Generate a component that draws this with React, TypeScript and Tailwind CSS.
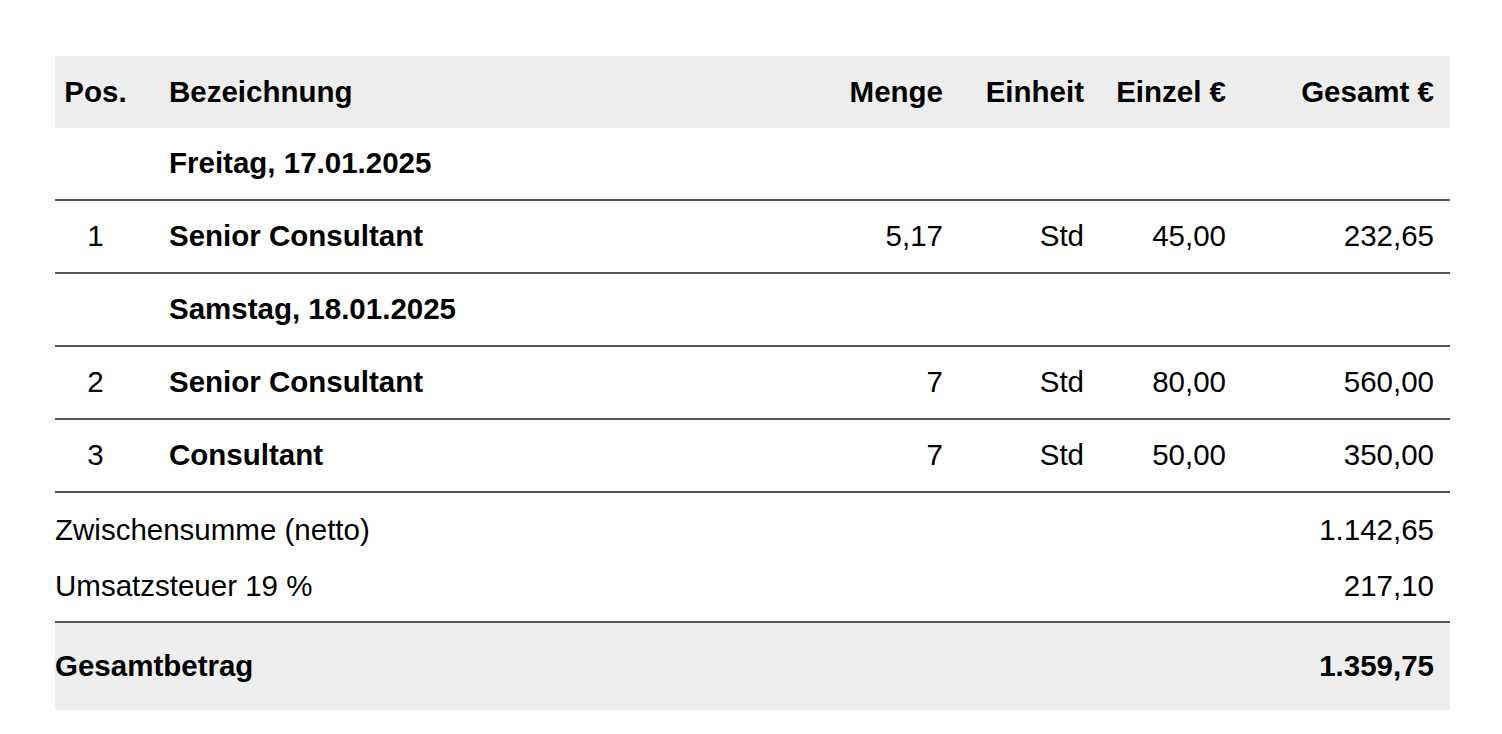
const rows: Array<
  | { kind: "date"; label: string }
  | { kind: "item"; pos: string; name: string; qty: string; unit: string; price: string; total: string }
> = [
  { kind: "date", label: "Freitag, 17.01.2025" },
  { kind: "item", pos: "1", name: "Senior Consultant", qty: "5,17", unit: "Std", price: "45,00", total: "232,65" },
  { kind: "date", label: "Samstag, 18.01.2025" },
  { kind: "item", pos: "2", name: "Senior Consultant", qty: "7", unit: "Std", price: "80,00", total: "560,00" },
  { kind: "item", pos: "3", name: "Consultant", qty: "7", unit: "Std", price: "50,00", total: "350,00" },
];

const cols = "grid grid-cols-[98px_1fr_141px_139px_142px_208px] items-center";

export default function App() {
  return (
    <div
      className="min-h-[734px] bg-white pl-[55px] pt-[56px] text-[29.5px] text-black"
      style={{ fontFamily: '"Liberation Sans", Arial, sans-serif' }}
    >
      <div className="w-[1395px]">
        {/* header */}
        <div className={`${cols} h-[72px] bg-[#eeeeee] font-bold`}>
          <div className="pr-[17px] text-center">Pos.</div>
          <div className="pl-[16px]">Bezeichnung</div>
          <div className="pr-[18px] text-right">Menge</div>
          <div className="pr-[16px] text-right">Einheit</div>
          <div className="pr-[16px] text-right">Einzel €</div>
          <div className="pr-[16px] text-right">Gesamt €</div>
        </div>

        {rows.map((r, i) =>
          r.kind === "date" ? (
            <div key={i} className={`${cols} h-[73px] border-b-2 border-[#555]`}>
              <div />
              <div className="pl-[16px] font-bold">{r.label}</div>
            </div>
          ) : (
            <div key={i} className={`${cols} h-[73px] border-b-2 border-[#555]`}>
              <div className="pr-[17px] text-center">{r.pos}</div>
              <div className="pl-[16px] font-bold">{r.name}</div>
              <div className="pr-[18px] text-right">{r.qty}</div>
              <div className="pr-[16px] text-right">{r.unit}</div>
              <div className="pr-[16px] text-right">{r.price}</div>
              <div className="pr-[16px] text-right">{r.total}</div>
            </div>
          )
        )}

        {/* totals */}
        <div className="pt-[9px] pb-[7px]">
          <div className="flex h-[56px] items-center justify-between pr-[16px]">
            <span>Zwischensumme (netto)</span>
            <span>1.142,65</span>
          </div>
          <div className="flex h-[56px] items-center justify-between pr-[16px]">
            <span>Umsatzsteuer 19 %</span>
            <span>217,10</span>
          </div>
        </div>
        <div className="flex h-[89px] items-center justify-between border-t-2 border-[#555] bg-[#eeeeee] pr-[16px] font-bold">
          <span>Gesamtbetrag</span>
          <span>1.359,75</span>
        </div>
      </div>
    </div>
  );
}
